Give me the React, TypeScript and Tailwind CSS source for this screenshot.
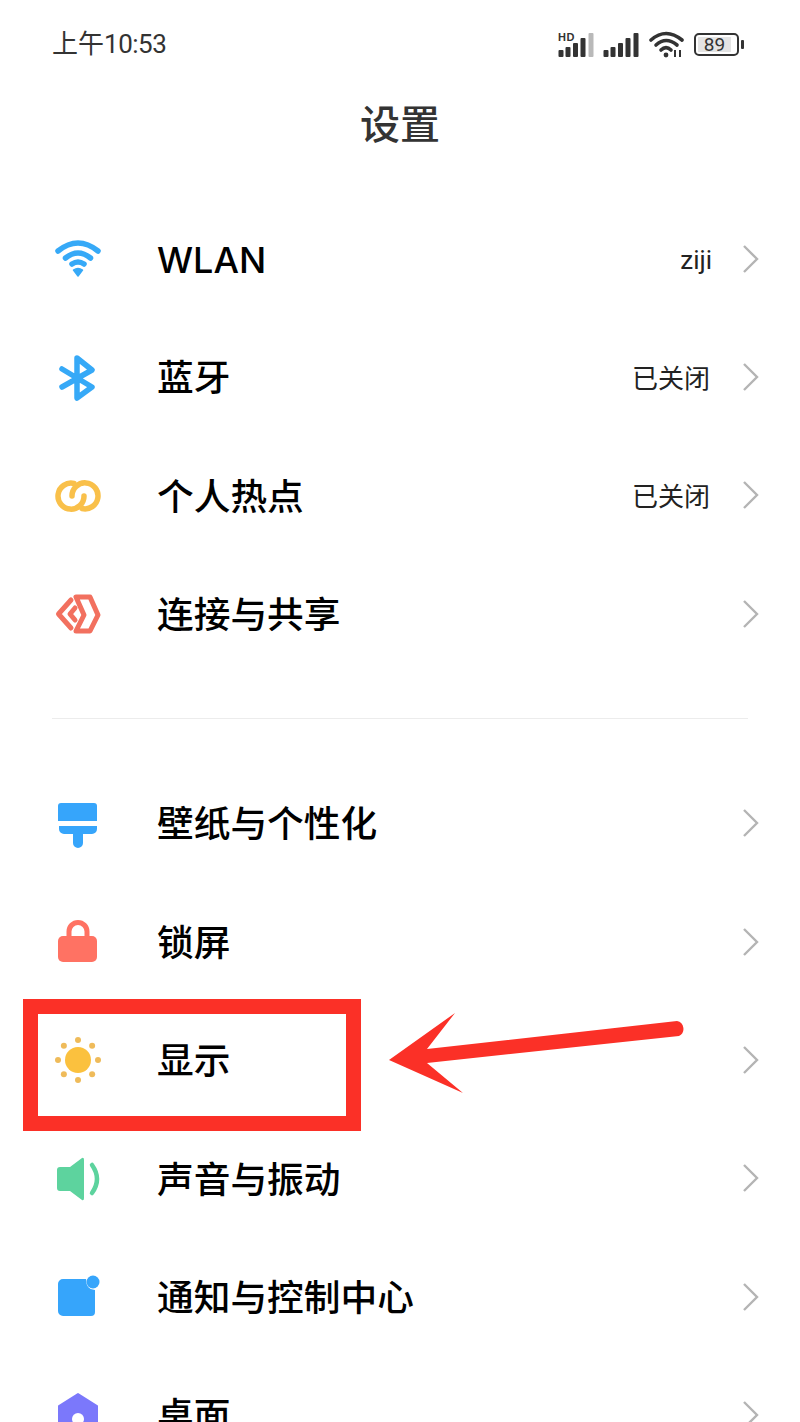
import type { ReactNode } from "react";

const stack = "font-['Roboto','Noto_Sans_CJK_SC',sans-serif]";

function Chevron() {
  return (
    <svg width="18" height="30" viewBox="0 0 18 30" fill="none" className="mb-[1px] shrink-0">
      <path d="M2 2 L15 15 L2 28" stroke="#b4b4b4" strokeWidth="2.4" />
    </svg>
  );
}

function Icon({ children }: { children: ReactNode }) {
  return (
    <svg width="56" height="56" viewBox="0 0 56 56" fill="none" className="shrink-0">
      {children}
    </svg>
  );
}

const WifiIcon = () => (
  <Icon>
    <g stroke="#36a9f7" strokeWidth="5.5" strokeLinecap="round">
      <path d="M8 20 Q28 4 48 20" />
      <path d="M15.5 27 Q28 17 40.5 27" />
      <path d="M22 33 Q28 29 34 33" />
    </g>
    <path d="M23.5 39 Q28 36 32.5 39 L28 45 Z" fill="#36a9f7" stroke="#36a9f7" strokeWidth="1.5" strokeLinejoin="round" />
  </Icon>
);

const BluetoothIcon = () => (
  <Icon>
    <path d="M12 19 L42 37 L27 48 V8 L42 20 L12 37" stroke="#36a9f7" strokeWidth="5.5" strokeLinecap="round" strokeLinejoin="round" />
  </Icon>
);

const LinkIcon = () => (
  <Icon>
    <g stroke="#f9c04a" strokeWidth="5.5" strokeLinecap="round">
      <path d="M24 15.5 A13 13 0 1 0 34 28" />
      <path d="M32 40.5 A13 13 0 1 0 22 28" />
    </g>
  </Icon>
);

const ShareIcon = () => (
  <Icon>
    <g stroke="#f2705f" strokeWidth="5" strokeLinejoin="round" strokeLinecap="round">
      <path d="M21 14 L8.5 28 L21 42" />
      <path d="M25 22 L20 28 L25 34" />
      <path d="M26 11 H40 L48 29 L40 45 H26 L34 29 Z" />
    </g>
  </Icon>
);

const BrushIcon = () => (
  <Icon>
    <path d="M8 10 a3 3 0 0 1 3-3 h33 a3 3 0 0 1 3 3 v15 H8 Z" fill="#36a5fb" />
    <path d="M9 30 H47 v3 a5 5 0 0 1 -5 5 h-9 v9 a5 5 0 0 1 -10 0 v-9 h-9 a5 5 0 0 1 -5 -5 Z" fill="#36a5fb" />
  </Icon>
);

const LockIcon = () => (
  <Icon>
    <path d="M19 24 V17.5 a9 9 0 0 1 18 0 V24" stroke="#ff7263" strokeWidth="5" />
    <rect x="8" y="22" width="39" height="26" rx="5" fill="#ff7263" />
  </Icon>
);

const SunIcon = () => {
  const dots = [0, 45, 90, 135, 180, 225, 270, 315];
  return (
    <Icon>
      <circle cx="28" cy="27" r="13" fill="#fbc13e" />
      {dots.map((a) => (
        <circle
          key={a}
          cx={28 + 20 * Math.cos((a * Math.PI) / 180)}
          cy={27 + 20 * Math.sin((a * Math.PI) / 180)}
          r="3"
          fill="#efbb5a"
        />
      ))}
    </Icon>
  );
};

const SpeakerIcon = () => (
  <Icon>
    <path d="M10 16 H20 L32 7 Q34 6 34 9 V47 Q34 50 32 49 L20 40 H10 Q7 40 7 37 V19 Q7 16 10 16 Z" fill="#5dd39e" />
    <path d="M42 14 Q52 28 42 42" stroke="#5dd39e" strokeWidth="4.5" strokeLinecap="round" />
  </Icon>
);

const NoticeIcon = () => (
  <Icon>
    <path d="M13 10 H36 Q36 21 45 21 V43 a4 4 0 0 1 -4 4 H13 a5 5 0 0 1 -5 -5 V15 a5 5 0 0 1 5 -5 Z" fill="#36a5fb" />
    <circle cx="43" cy="13" r="6.5" fill="#36a5fb" />
  </Icon>
);

const HomeIcon = () => (
  <Icon>
    <path d="M28 6 L47 18 V50 H9 V18 Z" fill="#7b78fb" stroke="#7b78fb" strokeWidth="2" strokeLinejoin="round" />
    <circle cx="28" cy="31" r="6" fill="#fff" />
  </Icon>
);

function Row({ icon, title, value }: { icon: ReactNode; title: ReactNode; value?: ReactNode }) {
  return (
    <div className="flex h-[118.4px] items-center pl-[50px] pr-[40px]">
      {icon}
      <span className="ml-[51px] flex-1 pt-[4px] text-[36.7px] font-medium leading-none text-black">{title}</span>
      {value}
      <Chevron />
    </div>
  );
}

const Off = () => <span className="mr-[32px] pt-[2px] text-[26px] leading-none text-[#222]">已关闭</span>;

function SignalBars({ last }: { last: string }) {
  return (
    <svg width="36" height="28" viewBox="0 0 36 28">
      <rect x="0.5" y="20" width="5" height="7" rx="1" fill="#333" />
      <rect x="7.5" y="17" width="5" height="10" rx="1" fill="#333" />
      <rect x="15" y="13" width="5" height="14" rx="1" fill="#333" />
      <rect x="22.5" y="8" width="5" height="19" rx="1" fill="#333" />
      <rect x="30.5" y="3" width="5" height="24" rx="1" fill={last} />
    </svg>
  );
}

function StatusIcons() {
  return (
    <div className="flex items-center">
      <div className="relative h-[28px] w-[36px]">
        <span className="absolute left-0 top-[2px] font-['Liberation_Sans',sans-serif] text-[11px] font-bold leading-none tracking-[0.5px] text-[#333]">HD</span>
        <SignalBars last="#b9b9b9" />
      </div>
      <div className="ml-[9px]">
        <SignalBars last="#333" />
      </div>
      <svg width="36" height="28" viewBox="0 0 36 28" fill="none" className="ml-[10px]">
        <g stroke="#333" strokeWidth="3.6" strokeLinecap="round">
          <path d="M2 10 Q17 -3 33 10" />
          <path d="M7 15 Q17 6 28 15" />
          <path d="M12 20 Q17 15 22 20" />
        </g>
        <circle cx="17" cy="25" r="2.4" fill="#333" />
        <path d="M26 20 V27 M31 20 V27" stroke="#333" strokeWidth="2" />
      </svg>
      <div className="ml-[9px] flex items-center">
        <div className="flex h-[23px] w-[45px] items-center rounded-[5px] border-[2.5px] border-[#333] p-[2px]">
          <div className="flex h-full w-[33px] items-center justify-center bg-[#e4e4e4] text-[19px] leading-none text-[#333]">89</div>
        </div>
        <div className="ml-[2px] h-[9px] w-[3px] rounded-[1px] bg-[#333]" />
      </div>
    </div>
  );
}

export default function App() {
  return (
    <div className={`relative h-[1422px] w-[800px] overflow-hidden bg-white ${stack}`}>
      {/* Status bar */}
      <div className="flex h-[88px] items-center justify-between pl-[52px] pr-[56px]">
        <span className="text-[26px] leading-none text-[#333]">
          上午<span className="tracking-[-0.5px]">10:53</span>
        </span>
        <StatusIcons />
      </div>

      {/* Title */}
      <div className="flex h-[76px] items-center justify-center">
        <h1 className="text-[40px] font-medium leading-none text-[#333]">设置</h1>
      </div>

      <div className="h-[36px]" />

      <Row
        icon={<WifiIcon />}
        title={<span className="font-['Inter',sans-serif] text-[36px]">WLAN</span>}
        value={<span className="mr-[30px] pt-[2px] text-[26px] leading-none text-[#222]">ziji</span>}
      />
      <Row icon={<BluetoothIcon />} title="蓝牙" value={<Off />} />
      <Row icon={<LinkIcon />} title="个人热点" value={<Off />} />
      <Row icon={<ShareIcon />} title="连接与共享" />

      <div className="mx-[52px] mb-[46px] mt-[44px] h-px bg-[#ececec]" />

      <Row icon={<BrushIcon />} title="壁纸与个性化" />
      <Row icon={<LockIcon />} title="锁屏" />
      <Row icon={<SunIcon />} title="显示" />
      <Row icon={<SpeakerIcon />} title="声音与振动" />
      <Row icon={<NoticeIcon />} title="通知与控制中心" />
      <Row icon={<HomeIcon />} title="桌面" />

      {/* Red annotation box */}
      <div className="absolute left-[23px] top-[999px] h-[132px] w-[338px] border-[15px] border-[#fb3027]" />

      {/* Red annotation arrow */}
      <svg className="absolute left-[380px] top-[1000px]" width="320" height="110" viewBox="0 0 320 110">
        <path d="M9 60 L75 13 L47 49 L297 21 A8 8 0 0 1 299 36 L47 63 L83 93 Z" fill="#fb3027" />
      </svg>
    </div>
  );
}
